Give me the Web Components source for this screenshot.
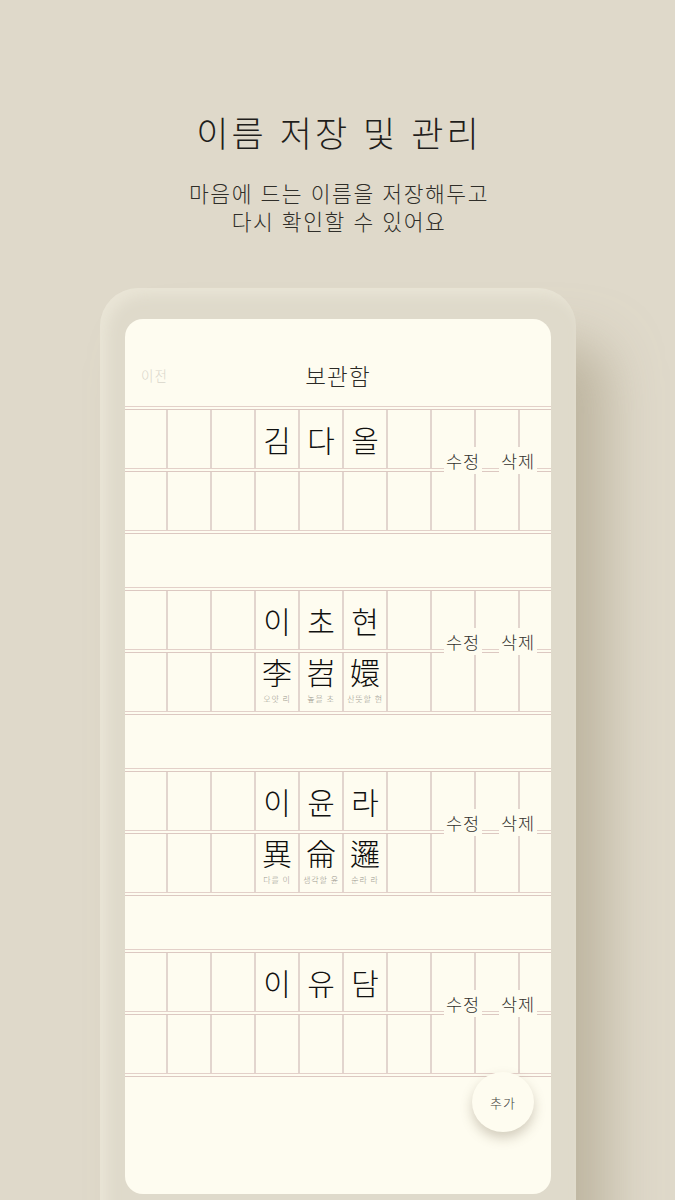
<!DOCTYPE html>
<html lang="ko"><head><meta charset="utf-8"><title>보관함</title>
<style>
html,body{margin:0;padding:0;background:#dfd9ca}
body{width:675px;height:1200px;overflow:hidden;font-family:"Noto Sans CJK KR","Noto Sans",sans-serif;font-weight:300;color:#222}
</style></head><body>
<promo-page>
  <promo-header slot="header" title="이름 저장 및 관리" line1="마음에 드는 이름을 저장해두고" line2="다시 확인할 수 있어요"></promo-header>
  <phone-frame>
    <top-bar back="이전" title="보관함"></top-bar>
    <name-block name="김다올"></name-block>
    <name-block name="이초현" hanja="李,岧,嬛" mean="오얏 리,높을 초,산뜻할 현"></name-block>
    <name-block name="이윤라" hanja="異,侖,邏" mean="다를 이,생각할 윤,순라 라"></name-block>
    <name-block name="이유담"></name-block>
    <add-button label="추가"></add-button>
  </phone-frame>
</promo-page>
<script>
const def=(n,html,init)=>customElements.define(n,class extends HTMLElement{
  connectedCallback(){ if(this.shadowRoot) return; const r=this.attachShadow({mode:'open'}); r.innerHTML=html; init&&init(r,this);}
});
def('promo-page',`<style>:host{display:flex;flex-direction:column;height:1200px;overflow:hidden}::slotted(*){flex:none}</style><slot name="header"></slot><slot></slot>`);
def('promo-header',`<style>
:host{display:flex;flex-direction:column;align-items:center;height:288px;box-sizing:border-box;padding:105px 0 0 3px;color:#1f1e1b}
h1{margin:0;font-weight:300;font-size:35px;line-height:54px;letter-spacing:3.05px}
p{margin:20px 0 0;font-size:21.5px;line-height:28px;letter-spacing:1.55px;text-align:center;color:#2f2e29}
</style><h1></h1><p><span id="a"></span><br><span id="b"></span></p>`,(r,h)=>{
  r.querySelector('h1').textContent=h.getAttribute('title');
  r.getElementById('a').textContent=h.getAttribute('line1');
  r.getElementById('b').textContent=h.getAttribute('line2');
});
def('phone-frame',`<style>
:host{display:block;width:476px;margin-left:100px;height:960px;box-sizing:border-box;padding:31px 25px 0 25px;border-radius:38px 38px 0 0;
background:#dfdacb;
box-shadow:inset 7px 7px 14px rgba(255,252,236,.34),38px 50px 52px -6px rgba(165,155,130,.58)}
.card{position:relative;height:875px;background:#fefcf0;border-radius:18px;overflow:hidden}
</style><div class="card"><slot></slot></div>`);
def('top-bar',`<style>
:host{display:block;height:87px}
.row{display:flex;align-items:center;justify-content:center;height:87px;padding-top:24px;box-sizing:border-box;position:relative}
.t{font-size:22.5px;letter-spacing:1.2px;color:#2b2a26}
.b{position:absolute;left:16px;top:24px;bottom:0;display:flex;align-items:center;font-size:13.5px;letter-spacing:1px;color:#d9d6cb}
</style><div class="row"><span class="b"></span><span class="t"></span></div>`,(r,h)=>{
  r.querySelector('.t').textContent=h.getAttribute('title');
  r.querySelector('.b').textContent=h.getAttribute('back');
});
def('name-block',`<style>
:host{display:block;position:relative;margin-bottom:53px}
.rule{height:4px;box-sizing:border-box;border-top:1px solid #e3d0c9;border-bottom:1px solid #dcc8c1}
.row{display:grid;grid-template-columns:43px repeat(8,44px) 31px;height:58px}
.c{border-right:2px solid #e2d5ce;box-sizing:border-box;display:flex;flex-direction:column;align-items:center;position:relative;min-width:0}
.c:last-child{border-right:0}
.n{font-size:30px;line-height:58px;color:#111110}
.h{font-size:30px;line-height:36px;color:#0d0d0c}
.m{font-size:8px;line-height:10px;color:#9a978d;white-space:nowrap;letter-spacing:.8px;margin-top:5px}
.acts{position:absolute;left:319px;top:41px;display:flex;gap:17px}
.acts span{background:#fefcf0;width:38px;height:27px;display:flex;align-items:center;justify-content:center;font-size:17.5px;color:#33322e;letter-spacing:1px;white-space:nowrap}
</style>
<div class="rule"></div><div class="row" id="r1"></div><div class="rule"></div><div class="row" id="r2"></div><div class="rule"></div>
<div class="acts"><span>수정</span><span>삭제</span></div>`,(r,h)=>{
  const name=[...h.getAttribute('name')];
  const han=(h.getAttribute('hanja')||'').split(',').filter(Boolean);
  const mean=(h.getAttribute('mean')||'').split(',').filter(Boolean);
  const fill=(id,fn)=>{const el=r.getElementById(id);for(let i=0;i<10;i++){const c=document.createElement('div');c.className='c';fn(c,i-3);el.append(c);}};
  fill('r1',(c,i)=>{if(i>=0&&i<3){const s=document.createElement('span');s.className='n';s.textContent=name[i];c.append(s);}});
  fill('r2',(c,i)=>{if(i>=0&&i<3&&han[i]){const s=document.createElement('span');s.className='h';s.textContent=han[i];const m=document.createElement('span');m.className='m';m.textContent=mean[i];c.append(s,m);}});
});
def('add-button',`<style>
:host{position:absolute;left:347px;top:753px;width:62px;height:60px;border-radius:50%;background:#fefcf0;display:flex;align-items:center;justify-content:center;
box-shadow:0 6px 12px rgba(120,110,85,.32);font-size:13px;letter-spacing:1px;color:#3f3e3a}
</style><span></span>`,(r,h)=>{r.querySelector('span').textContent=h.getAttribute('label');});
</script>
</body></html>
